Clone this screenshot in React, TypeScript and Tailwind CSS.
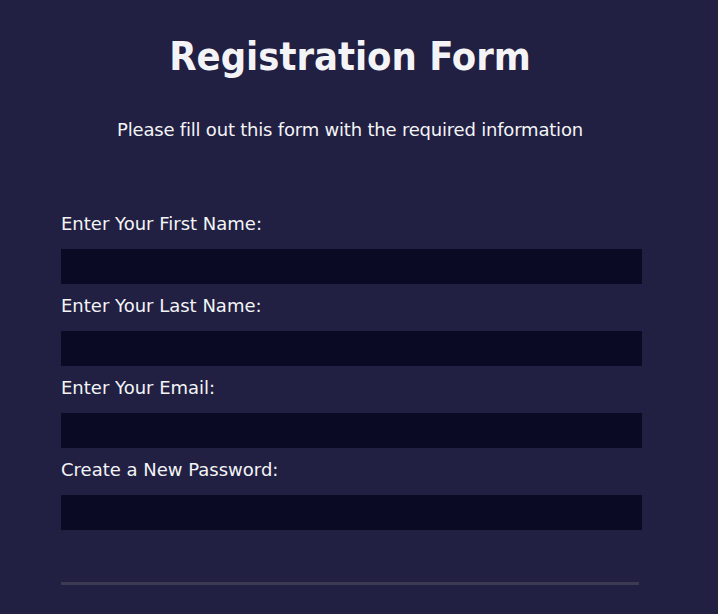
export default function App() {
  const fields = [
    { label: 'Enter Your First Name:', type: 'text' },
    { label: 'Enter Your Last Name:', type: 'text' },
    { label: 'Enter Your Email:', type: 'email' },
    { label: 'Create a New Password:', type: 'password' },
  ];

  return (
    <div
      className="min-h-[614px] bg-[#212042] text-[#f4f4f8] pl-[61px] pt-[30px]"
      style={{ fontFamily: '"DejaVu Sans", sans-serif' }}
    >
      <div className="w-[578px]">
        <h1
          className="text-center text-[39.5px] font-bold leading-[52px]"
          style={{ fontFamily: '"DejaVu Sans Condensed", "DejaVu Sans", sans-serif' }}
        >
          Registration Form
        </h1>
        <p className="mt-[36px] text-center text-[18px] leading-[24px] tracking-[-0.2px]">
          Please fill out this form with the required information
        </p>

        <form className="mt-[70px] flex flex-col">
          {fields.map((f) => (
            <label key={f.label} className="flex flex-col">
              <span className="text-[18px] leading-[24px] mb-[13px]">{f.label}</span>
              <input type={f.type} className="h-[35px] w-[581px] bg-[#0a0a24] outline-none border-0 mb-[10px]" />
            </label>
          ))}
          <hr className="mt-[42px] w-[578px] border-0 h-[3px] bg-[#3b3a52]" />
        </form>
      </div>
    </div>
  );
}
